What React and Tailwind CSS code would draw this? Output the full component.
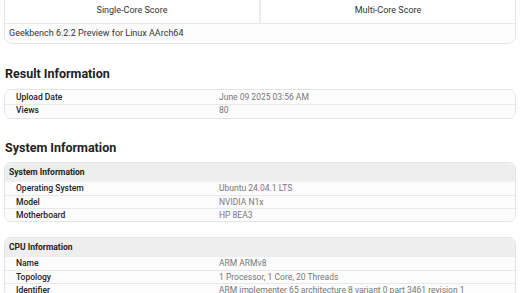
import React from 'react';

const resultRows = [
  ['Upload Date', 'June 09 2025 03:56 AM'],
  ['Views', '80'],
];

const systemRows = [
  ['Operating System', 'Ubuntu 24.04.1 LTS'],
  ['Model', 'NVIDIA N1x'],
  ['Motherboard', 'HP 8EA3'],
];

const cpuRows = [
  ['Name', 'ARM ARMv8'],
  ['Topology', '1 Processor, 1 Core, 20 Threads'],
  ['Identifier', 'ARM implementer 65 architecture 8 variant 0 part 3461 revision 1'],
];

const Rows = ({ rows }) =>
  rows.map(([label, value], i) => (
    <div
      key={label}
      className={`flex h-[13px] items-center bg-[#fcfcfc] ${i > 0 ? 'border-t border-[#e8e8e8]' : ''}`}
    >
      <div className="w-[214px] shrink-0 pl-[11px] font-medium text-[#222]">{label}</div>
      <div className="text-[#777]">{value}</div>
    </div>
  ));

const App = () => {
  return (
    <div
      className="min-h-screen bg-white px-[4px] text-[8.5px] leading-none"
      style={{ fontFamily: 'Roboto, "Liberation Sans", sans-serif' }}
    >
      {/* Score card (scrolled, top cut off) */}
      <div className="-mt-[8px] overflow-hidden rounded-[8px] border border-[#e4e4e4] bg-white">
        <div className="flex h-[31px] border-b border-[#e8e8e8]">
          <div className="flex flex-1 items-end justify-center border-r-2 border-[#ececec] pb-[8px] text-[9px] text-[#333]">
            Single-Core Score
          </div>
          <div className="flex flex-1 items-end justify-center pb-[8px] text-[9px] text-[#333]">
            Multi-Core Score
          </div>
        </div>
        <div className="flex h-[19px] items-center bg-[#fcfcfc] pl-[4px] text-[9px] text-[#333]">
          Geekbench 6.2.2 Preview for Linux AArch64
        </div>
      </div>

      {/* Result Information */}
      <h2 className="mt-[24px] pl-[1px] text-[12.5px] font-bold text-[#222]">Result Information</h2>
      <div className="mt-[8px] overflow-hidden rounded-[7px] border border-[#e4e4e4] py-[1px]">
        <Rows rows={resultRows} />
      </div>

      {/* System Information */}
      <h2 className="mt-[23px] pl-[1px] text-[12.5px] font-bold text-[#222]">System Information</h2>
      <div className="mt-[8px] overflow-hidden rounded-[7px] border border-[#e4e4e4]">
        <div className="flex h-[19px] items-center bg-[#eeeeee] pl-[4px] font-bold text-[#222]">
          System Information
        </div>
        <Rows rows={systemRows} />
      </div>

      <div className="mt-[15px] overflow-hidden rounded-[7px] border border-[#e4e4e4]">
        <div className="flex h-[19px] items-center bg-[#eeeeee] pl-[4px] font-bold text-[#222]">
          CPU Information
        </div>
        <Rows rows={cpuRows} />
      </div>
    </div>
  );
};

export default App;
